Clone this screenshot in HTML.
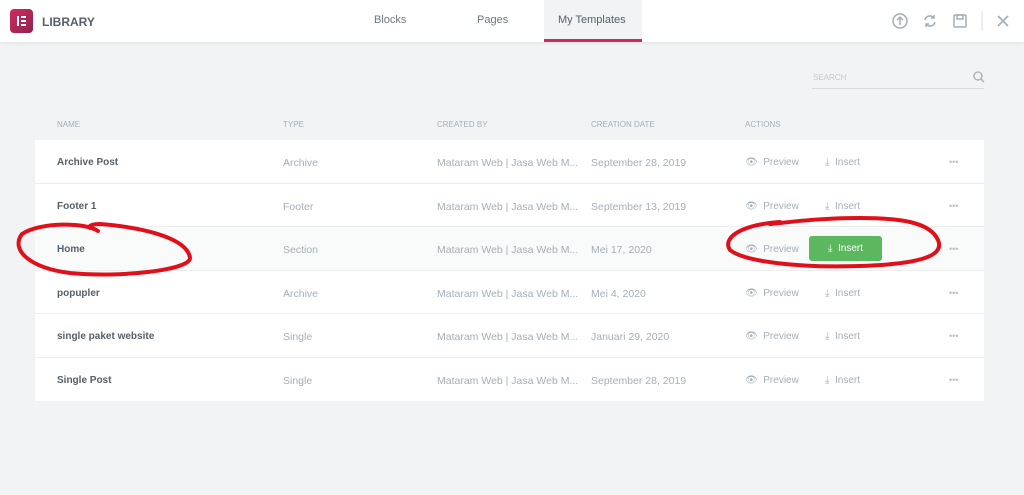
<!DOCTYPE html><html><head><style>
*{margin:0;padding:0;box-sizing:border-box}
body{width:1024px;height:495px;background:#f1f3f5;font-family:"Liberation Sans",sans-serif;position:relative;overflow:hidden;color:#6d7882}
.hdr{position:absolute;left:0;top:0;width:1024px;height:42px;background:#fff;box-shadow:0 1px 4px rgba(0,0,0,.08)}
.logo{position:absolute;left:10px;top:9px;width:23px;height:24px;border-radius:4px;background:linear-gradient(135deg,#d2295c,#8e2451)}
.logo i{position:absolute;background:#fff}
.t{position:absolute;font-size:11px}
.tab{position:absolute;top:14px;font-size:11px;color:#6d7882}
.row{position:absolute;left:35px;width:949px;height:43.5px;background:#fff;border-bottom:1px solid #eceef0}
.row span{position:absolute;top:17px;font-size:10.5px;color:#a4afb7}
.row span.a{font-size:10px}
.row span.d{color:#b8c0c6;font-size:9px}
.row .n{left:22px;color:#556068;font-weight:bold;font-size:10px}
.hd{position:absolute;top:120px;font-size:8px;color:#a4afb7}
</style></head><body>
<div class="hdr">
<div class="logo"><i style="left:7px;top:7px;width:2px;height:10px"></i><i style="left:11px;top:7px;width:5px;height:2px"></i><i style="left:11px;top:11px;width:5px;height:2px"></i><i style="left:11px;top:15px;width:5px;height:2px"></i></div>
<div class="t" style="left:42px;top:15px;font-weight:bold;font-size:12px;color:#556068">LIBRARY</div>
<div class="tab" style="left:374px">Blocks</div>
<div class="tab" style="left:477px">Pages</div>
<div style="position:absolute;left:544px;top:0;width:98px;height:42px;background:#f1f3f5;border-bottom:3px solid #d2295c"></div>
<div class="tab" style="left:558px;color:#556068">My Templates</div>
<svg style="position:absolute;left:890px;top:11px" width="130" height="22" fill="none" stroke="#a4afb7" stroke-width="1.5">
<circle cx="10" cy="10" r="7"/><path d="M10 14V6M7 9l3-3 3 3"/>
<path d="M35 9a5 5 0 0 1 8-3l1 1M45 11a5 5 0 0 1-8 3l-1-1M44 4v3h-3M36 16v-3h3"/>
<rect x="64" y="4" width="12" height="12" rx="1"/><rect x="67" y="4" width="6" height="4"/>
<path d="M92 0v20" stroke="#e6e8ea"/><path d="M108 5l10 10M118 5l-10 10" stroke-width="1.8"/>
</svg>
</div>
<div class="t" style="left:813px;top:73px;font-size:8px;color:#c2cbd2">SEARCH</div>
<svg style="position:absolute;left:972px;top:70px" width="14" height="14" fill="none" stroke="#a4afb7" stroke-width="1.3"><circle cx="6" cy="6" r="4"/><path d="M9 9l3 3"/></svg>
<div style="position:absolute;left:812px;top:88px;width:172px;height:1px;background:#d5dadf"></div>
<div class="hd" style="left:57px">NAME</div><div class="hd" style="left:283px">TYPE</div><div class="hd" style="left:437px">CREATED BY</div><div class="hd" style="left:591px">CREATION DATE</div><div class="hd" style="left:745px">ACTIONS</div>
<div class="row" style="top:140px"><span class="n">Archive Post</span><span style="left:248px">Archive</span><span style="left:402px">Mataram Web | Jasa Web M...</span><span style="left:556px">September 28, 2019</span><span class="a" style="left:710px">👁&nbsp; Preview</span><span class="a" style="left:790px">⤓ &nbsp;Insert</span><span class="d" style="left:914px">•••</span></div>
<div class="row" style="top:183.5px"><span class="n">Footer 1</span><span style="left:248px">Footer</span><span style="left:402px">Mataram Web | Jasa Web M...</span><span style="left:556px">September 13, 2019</span><span class="a" style="left:710px">👁&nbsp; Preview</span><span class="a" style="left:790px">⤓ &nbsp;Insert</span><span class="d" style="left:914px">•••</span></div>
<div class="row" style="top:227px;background:#f9fafa"><span class="n">Home</span><span style="left:248px">Section</span><span style="left:402px">Mataram Web | Jasa Web M...</span><span style="left:556px">Mei 17, 2020</span><span class="a" style="left:710px">👁&nbsp; Preview</span><div style="position:absolute;left:774px;top:9px;width:73px;height:25px;background:#5bb85f;border-radius:3px;color:#fff;font-size:10px;text-align:center;line-height:25px">⤓ &nbsp;Insert</div><span class="d" style="left:914px">•••</span></div>
<div class="row" style="top:270.5px"><span class="n">popupler</span><span style="left:248px">Archive</span><span style="left:402px">Mataram Web | Jasa Web M...</span><span style="left:556px">Mei 4, 2020</span><span class="a" style="left:710px">👁&nbsp; Preview</span><span class="a" style="left:790px">⤓ &nbsp;Insert</span><span class="d" style="left:914px">•••</span></div>
<div class="row" style="top:314px"><span class="n">single paket website</span><span style="left:248px">Single</span><span style="left:402px">Mataram Web | Jasa Web M...</span><span style="left:556px">Januari 29, 2020</span><span class="a" style="left:710px">👁&nbsp; Preview</span><span class="a" style="left:790px">⤓ &nbsp;Insert</span><span class="d" style="left:914px">•••</span></div>
<div class="row" style="top:357.5px;border:none"><span class="n">Single Post</span><span style="left:248px">Single</span><span style="left:402px">Mataram Web | Jasa Web M...</span><span style="left:556px">September 28, 2019</span><span class="a" style="left:710px">👁&nbsp; Preview</span><span class="a" style="left:790px">⤓ &nbsp;Insert</span><span class="d" style="left:914px">•••</span></div>
<svg style="position:absolute;left:0;top:0" width="1024" height="495" fill="none" stroke="#e0101a" stroke-width="4" stroke-linecap="round">
<path d="M98 231C85 222 40 222 22 234C10 250 30 268 70 273C120 278 190 270 190 258C188 240 150 228 100 224C92 224 88 226 90 228"/>
<path d="M780 222C740 225 722 238 730 250C745 262 800 268 860 266C920 264 945 256 938 240C930 222 900 218 860 218C820 218 790 222 770 224"/>
</svg>
</body></html>
